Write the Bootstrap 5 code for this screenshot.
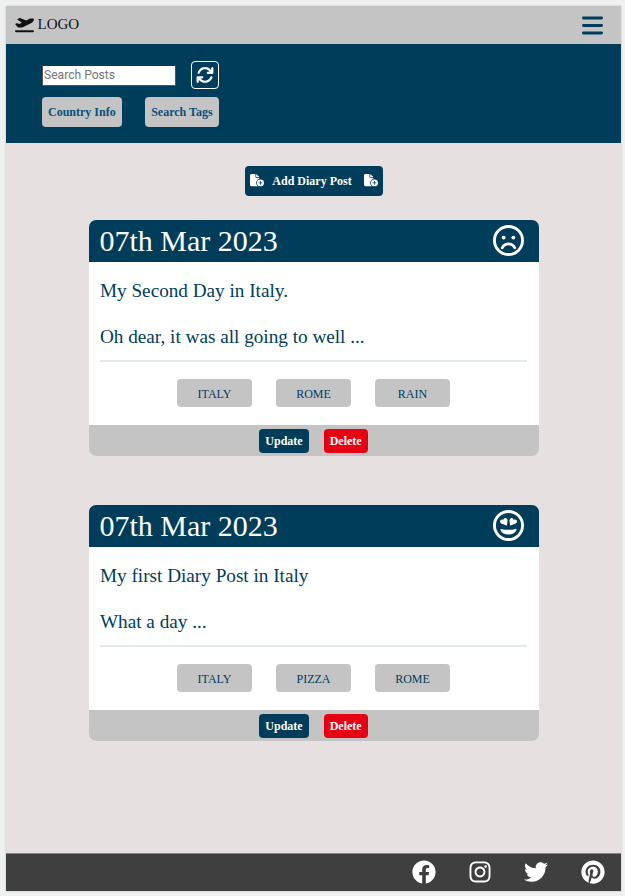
<!DOCTYPE html>
<html lang="en">
<head>
<meta charset="utf-8">
<meta name="viewport" content="width=device-width, initial-scale=1">
<title>Travel Diary</title>
<link href="https://cdn.jsdelivr.net/npm/bootstrap@5.3.0/dist/css/bootstrap.min.css" rel="stylesheet">
<style>
:root { --navy: #003d5b; --silver: #c4c4c4; }
body { background: #eff1f0; font-family: "Liberation Serif", "Times New Roman", serif; color: var(--navy); padding: 6px 4px 5px 6px; height: 896px; font-size: 12px; line-height: 1.2; overflow: hidden; }
svg { display: block; fill: currentColor; flex: none; }
.app-shell { height: 885px; background: #e6e0e0; box-shadow: 0 0 2px #bbb; }
.top-bar { height: 38px; background: var(--silver); padding: 0 18px 0 9px; }
.brand-link { font-size: 15px; color: #111; gap: 3.5px; }
.brand-link span { position: relative; top: -1px; }
.menu-toggle { color: var(--navy); }
.search-panel { height: 98.5px; background: var(--navy); padding: 17px 0 0 36px; }
.search-input { width: 134px; height: 21px; border: 1px solid #555; border-top-color: #0b3850; border-radius: 0; padding: 0 1px; background: #fff; font: 12.1px Roboto, sans-serif; }
.search-input::placeholder { color: #757575; opacity: 1; }
.refresh-btn { width: 28px; height: 28px; margin-left: 15px; border: 1.5px solid #fff; border-radius: 4px; background: none; color: #fff; }
.app-btn { border: 0; border-radius: 4px; font-weight: 700; font-size: 12px; line-height: 1; padding: 0 6px; white-space: nowrap; }
.btn-silver, .btn-silver:hover { background: var(--silver); color: #08507a; height: 30px; }
.panel-buttons { gap: 23.5px; margin-top: 8.4px; }
.btn-navy { background: var(--navy); color: #fff; }
.btn-red { background: #e70013; color: #fff; }
.add-btn { width: 138px; height: 30px; margin-top: 23px; padding: 0 5px 0 5px; }
.add-btn span { margin-right: 3px; }
.small-btn { height: 24px; }
.post { width: 450px; border: 0; border-radius: 7px; overflow: hidden; height: 236.5px; color: var(--navy); }
.post + .post { margin-top: 48.5px; }
.post-head { background: var(--navy); color: #fff; height: 42px; padding: 0 15px 0 11px; }
.post-date { font-size: 30px; line-height: 42px; font-weight: 400; }
.post-body { height: 163.5px; padding: 17px 11.5px 0; }
.post-text { font-size: 19.2px; line-height: 23.4px; height: 81px; }
.post-line { height: 2px; background: #e3eaee; }
.tag { width: 75px; height: 28px; border-radius: 4px; background: var(--silver); font-size: 12px; padding-top: 1px; }
.tag-row { gap: 24px; margin-top: 17.8px; }
.post-foot { height: 31px; background: var(--silver); gap: 15px; }
.bottom-bar { height: 38px; background: #3f3f3f; border-top: 1px solid #858585; color: #fff; padding-right: 16.5px; }
.social-links { gap: 32.2px; padding-bottom: 1px; }
</style>
</head>
<body>
<svg width="0" height="0" class="d-none">
  <symbol id="file-plus" viewBox="0 0 576 512"><path d="M0 64C0 28.7 28.7 0 64 0H224V128c0 17.7 14.3 32 32 32H384v38.6C310.1 219.5 256 287.4 256 368c0 59.1 29.1 111.3 73.7 143.3c-3.2 .5-6.4 .7-9.7 .7H64c-35.3 0-64-28.7-64-64V64zm384 64H256V0L384 128zm48 96a144 144 0 1 1 0 288 144 144 0 1 1 0-288zm16 80c0-8.8-7.2-16-16-16s-16 7.2-16 16v48H368c-8.8 0-16 7.2-16 16s7.2 16 16 16h48v48c0 8.8 7.2 16 16 16s16-7.2 16-16V384h48c8.8 0 16-7.2 16-16s-7.2-16-16-16H448V304z"/></symbol>
</svg>
<div class="app-shell d-flex flex-column">
  <header class="top-bar d-flex align-items-center justify-content-between">
    <a class="brand-link d-flex align-items-center text-decoration-none" href="#">
      <svg width="19" height="15.2" viewBox="0 0 640 512"><path d="M381 114.9L186.1 41.8c-16.7-6.2-35.2-5.3-51.1 2.7L89.1 67.4C78 73 77.2 88.5 87.6 95.2l146.9 94.5L136 240 77.8 214.1c-8.7-3.9-18.8-3.7-27.3 .6L18.3 230.8c-9.3 4.7-11.8 16.8-5 24.7l73.1 85.3c6.1 7.1 15 11.2 24.3 11.2H248.4c5 0 9.9-1.2 14.3-3.4L535.6 212.2c46.5-23.3 82.5-63.3 100.8-112C645.9 75 627.2 48 600.2 48H542.4c-20.2 0-40.2 4.8-58.2 14L381 114.9zM0 480c0 17.7 14.3 32 32 32H608c17.7 0 32-14.3 32-32s-14.3-32-32-32H32c-17.7 0-32 14.3-32 32z"/></svg>
      <span>LOGO</span>
    </a>
    <button class="menu-toggle border-0 bg-transparent p-0" aria-label="Menu">
      <svg width="21" height="19" viewBox="0 0 21 19"><rect y="0.5" width="21" height="3" rx="1.4"/><rect y="8" width="21" height="3" rx="1.4"/><rect y="15.5" width="21" height="3" rx="1.4"/></svg>
    </button>
  </header>
  <section class="search-panel">
    <div class="d-flex align-items-center">
      <input class="search-input" type="text" placeholder="Search Posts">
      <button class="refresh-btn d-flex align-items-center justify-content-center p-0" aria-label="Refresh">
        <svg width="18" height="18" viewBox="0 0 512 512"><path d="M105.1 202.6c7.7-21.8 20.2-42.3 37.8-59.8c62.5-62.5 163.8-62.5 226.3 0L386.3 160H336c-17.7 0-32 14.3-32 32s14.3 32 32 32H463.9c17.7 0 32-14.3 32-32V64c0-17.7-14.3-32-32-32s-32 14.3-32 32v51.2L414.4 97.6c-87.5-87.5-229.3-87.5-316.8 0C73.2 122 55.6 150.7 44.8 181.4c-5.9 16.7 2.9 34.9 19.5 40.8s34.9-2.9 40.8-19.5zM39 289.3c-5 1.5-9.8 4.2-13.7 8.2c-4 4-6.7 8.8-8.1 14c-.3 1.2-.6 2.5-.8 3.8c-.3 1.7-.4 3.4-.4 5.1V448c0 17.7 14.3 32 32 32s32-14.3 32-32V396.9l17.6 17.5c87.5 87.4 229.3 87.4 316.7 0c24.4-24.4 42.1-53.1 52.9-83.7c5.9-16.7-2.9-34.9-19.5-40.8s-34.9 2.9-40.8 19.5c-7.7 21.8-20.2 42.3-37.8 59.8c-62.5 62.5-163.8 62.5-226.3 0l-.1-.1L125.6 352H176c17.7 0 32-14.3 32-32s-14.3-32-32-32H48.4c-1.6 0-3.2 .1-4.8 .3s-3.1 .5-4.6 1z"/></svg>
      </button>
    </div>
    <div class="panel-buttons d-flex">
      <button class="app-btn btn-silver">Country Info</button>
      <button class="app-btn btn-silver">Search Tags</button>
    </div>
  </section>
  <main class="flex-grow-1 d-flex flex-column align-items-center">
    <button class="app-btn btn-navy add-btn d-flex align-items-center justify-content-between mb-4">
      <svg width="14" height="12.4"><use href="#file-plus"/></svg>
      <span>Add Diary Post</span>
      <svg width="14" height="12.4"><use href="#file-plus"/></svg>
    </button>
    <article class="card post">
      <div class="post-head d-flex align-items-center justify-content-between">
        <h2 class="post-date m-0">07th Mar 2023</h2>
        <svg width="31" height="31" viewBox="0 0 512 512"><circle cx="256" cy="256" r="232" fill="none" stroke="currentColor" stroke-width="48"/><circle cx="176" cy="208" r="32"/><circle cx="336" cy="208" r="32"/><path d="M152 377C176 333 213 312 256 312s80 21 104 65" fill="none" stroke="currentColor" stroke-width="46" stroke-linecap="round"/></svg>
      </div>
      <div class="post-body">
        <div class="post-text">My Second Day in Italy.<br><br>Oh dear, it was all going to well ...</div>
        <div class="post-line"></div>
        <div class="tag-row d-flex justify-content-center">
          <span class="tag d-flex align-items-center justify-content-center">ITALY</span>
          <span class="tag d-flex align-items-center justify-content-center">ROME</span>
          <span class="tag d-flex align-items-center justify-content-center">RAIN</span>
        </div>
      </div>
      <div class="post-foot d-flex align-items-center justify-content-center">
        <button class="app-btn small-btn btn-navy">Update</button>
        <button class="app-btn small-btn btn-red">Delete</button>
      </div>
    </article>
    <article class="card post">
      <div class="post-head d-flex align-items-center justify-content-between">
        <h2 class="post-date m-0">07th Mar 2023</h2>
        <svg width="31" height="31" viewBox="0 0 512 512"><circle cx="256" cy="256" r="232" fill="none" stroke="currentColor" stroke-width="48"/><path d="M223 256L148 229C118 219 108 190 123 170C137 151 160 152 173 162C178 139 198 128 217 136C236 144 242 163 239 181L231 250Q229 258 223 256zM289 256L364 229C394 219 404 190 389 170C375 151 352 152 339 162C334 139 314 128 295 136C276 144 270 163 273 181L281 250Q283 258 289 256z"/><path d="M370.5 313c12-4 24 6 19 18-22 50-74 74-134 74s-112-24-134-74c-5-12 7-22 19-18 35 9 74 14 115 14s80-5 115-14z"/></svg>
      </div>
      <div class="post-body">
        <div class="post-text">My first Diary Post in Italy<br><br>What a day ...</div>
        <div class="post-line"></div>
        <div class="tag-row d-flex justify-content-center">
          <span class="tag d-flex align-items-center justify-content-center">ITALY</span>
          <span class="tag d-flex align-items-center justify-content-center">PIZZA</span>
          <span class="tag d-flex align-items-center justify-content-center">ROME</span>
        </div>
      </div>
      <div class="post-foot d-flex align-items-center justify-content-center">
        <button class="app-btn small-btn btn-navy">Update</button>
        <button class="app-btn small-btn btn-red">Delete</button>
      </div>
    </article>
  </main>
  <footer class="bottom-bar d-flex align-items-center justify-content-end">
    <div class="social-links d-flex align-items-center">
      <svg width="24" height="24" viewBox="0 0 512 512"><path d="M504 256C504 119 393 8 256 8S8 119 8 256c0 123.78 90.69 226.38 209.25 245V327.69h-63V256h63v-54.64c0-62.15 37-96.48 93.67-96.48 27.14 0 55.52 4.84 55.52 4.84v61h-31.28c-30.8 0-40.41 19.12-40.41 38.73V256h68.78l-11 71.69h-57.78V501C413.31 482.38 504 379.78 504 256z"/></svg>
      <svg width="24" height="24" viewBox="0 0 448 512"><path d="M224.1 141c-63.6 0-114.9 51.3-114.9 114.9s51.3 114.9 114.9 114.9S339 319.5 339 255.9 287.7 141 224.1 141zm0 189.6c-41.1 0-74.7-33.5-74.7-74.7s33.5-74.7 74.7-74.7 74.7 33.5 74.7 74.7-33.6 74.7-74.7 74.7zm146.4-194.3c0 14.9-12 26.8-26.8 26.8-14.9 0-26.8-12-26.8-26.8s12-26.8 26.8-26.8 26.8 12 26.8 26.8zm76.1 27.2c-1.7-35.9-9.9-67.7-36.2-93.9-26.2-26.2-58-34.4-93.9-36.2-37-2.1-147.9-2.1-184.9 0-35.8 1.7-67.6 9.9-93.9 36.1s-34.4 58-36.2 93.9c-2.1 37-2.1 147.9 0 184.9 1.7 35.9 9.9 67.7 36.2 93.9s58 34.4 93.9 36.2c37 2.1 147.9 2.1 184.9 0 35.9-1.7 67.7-9.9 93.9-36.2 26.2-26.2 34.4-58 36.2-93.9 2.1-37 2.1-147.8 0-184.8zM398.8 388c-7.8 19.6-22.9 34.7-42.6 42.6-29.5 11.7-99.5 9-132.1 9s-102.7 2.6-132.1-9c-19.6-7.8-34.7-22.9-42.6-42.6-11.7-29.5-9-99.5-9-132.1s-2.6-102.7 9-132.1c7.8-19.6 22.9-34.7 42.6-42.6 29.5-11.7 99.5-9 132.1-9s102.7-2.6 132.1 9c19.6 7.8 34.7 22.9 42.6 42.6 11.7 29.5 9 99.5 9 132.1s2.7 102.7-9 132.1z"/></svg>
      <svg width="24" height="24" viewBox="0 0 512 512"><path d="M459.37 151.716c.325 4.548.325 9.097.325 13.645 0 138.72-105.583 298.558-298.558 298.558-59.452 0-114.68-17.219-161.137-47.106 8.447.974 16.568 1.299 25.34 1.299 49.055 0 94.213-16.568 130.274-44.832-46.132-.975-84.792-31.188-98.112-72.772 6.498.974 12.995 1.624 19.818 1.624 9.421 0 18.843-1.3 27.614-3.573-48.081-9.747-84.143-51.98-84.143-102.985v-1.299c13.969 7.797 30.214 12.67 47.431 13.319-28.264-18.843-46.781-51.005-46.781-87.391 0-19.492 5.197-37.36 14.294-52.954 51.655 63.675 129.3 105.258 216.365 109.807-1.624-7.797-2.599-15.918-2.599-24.04 0-57.828 46.782-104.934 104.934-104.934 30.213 0 57.502 12.67 76.67 33.137 23.715-4.548 46.456-13.32 66.599-25.34-7.798 24.366-24.366 44.833-46.132 57.827 21.117-2.273 41.584-8.122 60.426-16.243-14.292 20.791-32.161 39.308-52.628 54.253z"/></svg>
      <svg width="24" height="24" viewBox="0 0 496 512"><path d="M496 256c0 137-111 248-248 248-25.6 0-50.2-3.9-73.4-11.1 10.1-16.5 25.2-43.5 30.8-65 3-11.6 15.4-59 15.4-59 8.1 15.4 31.7 28.5 56.8 28.5 74.8 0 128.7-68.8 128.7-154.3 0-81.9-66.9-143.2-152.9-143.2-107 0-163.9 71.8-163.9 150.1 0 36.4 19.4 81.7 50.3 96.1 4.7 2.2 7.2 1.2 8.3-3.3.8-3.4 5-20.3 6.9-28.1.6-2.5.3-4.7-1.7-7.1-10.1-12.5-18.3-35.3-18.3-56.6 0-54.7 41.4-107.6 112-107.6 60.9 0 103.6 41.5 103.6 100.9 0 67.1-33.9 113.6-78 113.6-24.3 0-42.6-20.1-36.7-44.8 7-29.5 20.5-61.3 20.5-82.6 0-19-10.2-34.9-31.4-34.9-24.9 0-44.9 25.7-44.9 60.2 0 22 7.4 36.8 7.4 36.8s-24.5 103.8-29 123.2c-5 21.4-3 51.6-.9 71.2C65.4 450.9 0 361.1 0 256 0 119 111 8 248 8s248 111 248 248z"/></svg>
    </div>
  </footer>
</div>
<script src="https://cdn.jsdelivr.net/npm/bootstrap@5.3.0/dist/js/bootstrap.bundle.min.js"></script>
</body>
</html>
